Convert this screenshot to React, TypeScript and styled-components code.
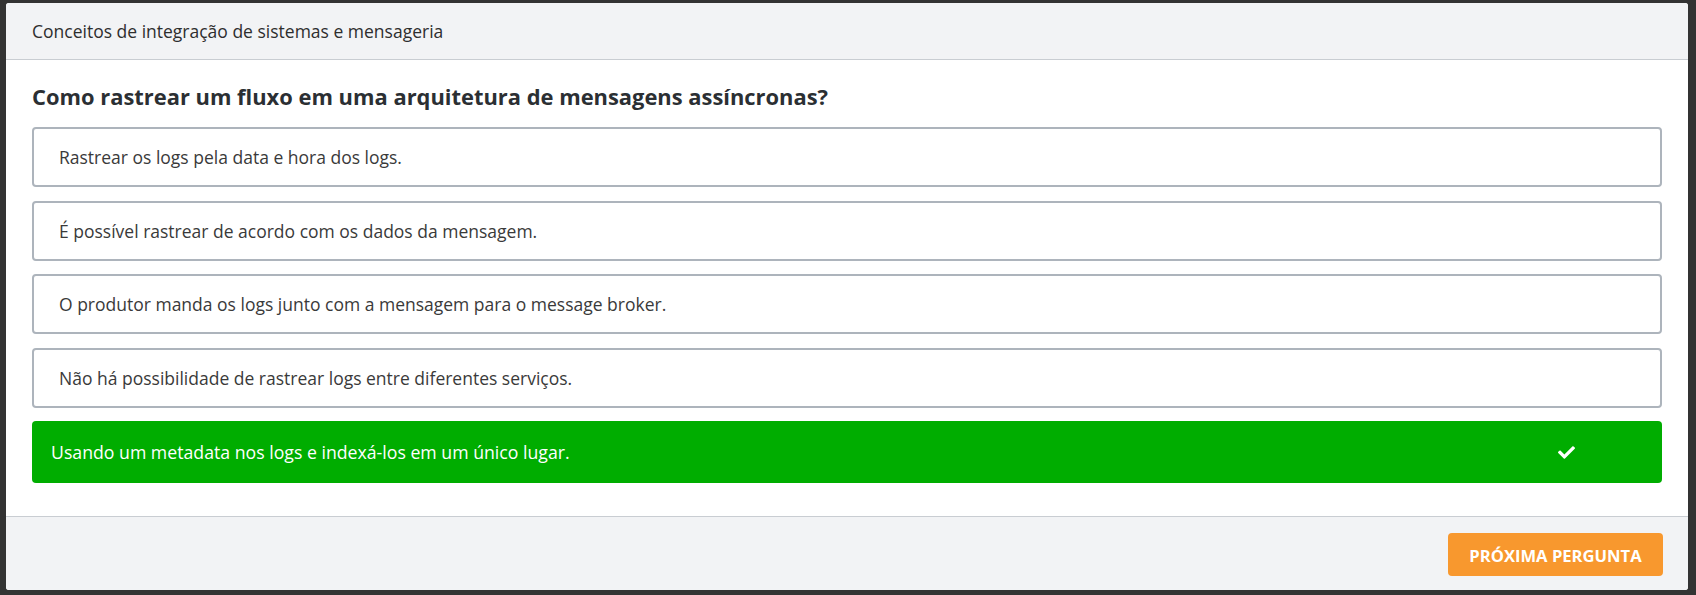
import React from "react";
import styled, { createGlobalStyle } from "styled-components";

const Global = createGlobalStyle`
  html, body { margin: 0; padding: 0; background: #333333; }
  body { font-family: "Open Sans", "Noto Sans", sans-serif; }
  * { box-sizing: border-box; }
`;

const Page = styled.div`
  padding: 3px 8px 5px 6px;
`;

const Card = styled.section`
  background: #ffffff;
  border-radius: 3px;
  overflow: hidden;
  height: 587px;
  display: flex;
  flex-direction: column;
`;

const Header = styled.header`
  height: 57px;
  background: #f2f3f5;
  border-bottom: 1px solid #c9cdd2;
  display: flex;
  align-items: center;
  padding: 0 26px;
  font-size: 17.5px;
  color: #2e2e2e;
`;

const Body = styled.div`
  padding: 22px 26px 33px;
  display: flex;
  flex-direction: column;
`;

const Question = styled.h2`
  margin: 0 0 15px;
  font-size: 21.9px;
  line-height: 30px;
  font-weight: 700;
  color: #2b2f33;
`;

const Options = styled.div`
  display: flex;
  flex-direction: column;
  gap: 13.5px;
`;

const Option = styled.div<{ $correct?: boolean }>`
  display: flex;
  align-items: center;
  justify-content: space-between;
  height: ${(p) => (p.$correct ? "62px" : "60px")};
  border-radius: 4px;
  border: ${(p) => (p.$correct ? "none" : "2px solid #adb4bc")};
  background: ${(p) => (p.$correct ? "#00ad00" : "#ffffff")};
  color: ${(p) => (p.$correct ? "#ffffff" : "#3a3a3a")};
  padding: ${(p) => (p.$correct ? "0 87px 0 19px" : "0 25px")};
  font-size: ${(p) => (p.$correct ? "17.7px" : "17.5px")};
`;

const Footer = styled.footer`
  flex: 1;
  background: #f2f3f5;
  border-top: 1px solid #c9cdd2;
  display: flex;
  justify-content: flex-end;
  align-items: flex-start;
  padding: 16px 25px 0;
`;

const NextButton = styled.button`
  width: 215px;
  height: 43px;
  padding: 2px 0 0;
  border: none;
  border-radius: 4px;
  background: #f8982e;
  color: #ffffff;
  font-family: "Open Sans", "Noto Sans", sans-serif;
  font-weight: 700;
  font-size: 16.6px;
  text-transform: uppercase;
  cursor: pointer;
`;

const Check = () => (
  <svg width="17" height="13" viewBox="0 0 512 384" fill="#ffffff" aria-hidden>
    <path d="M173.9 375.5L7.5 209.1c-10-10-10-26.2 0-36.2l36.2-36.2c10-10 26.2-10 36.2 0L192 248.8 432.1 8.7c10-10 26.2-10 36.2 0l36.2 36.2c10 10 10 26.2 0 36.2L210.1 375.5c-10 10-26.2 10-36.2 0z" />
  </svg>
);

const answers = [
  "Rastrear os logs pela data e hora dos logs.",
  "É possível rastrear de acordo com os dados da mensagem.",
  "O produtor manda os logs junto com a mensagem para o message broker.",
  "Não há possibilidade de rastrear logs entre diferentes serviços.",
];

export default function App() {
  return (
    <>
      <Global />
      <Page>
        <Card>
          <Header>Conceitos de integração de sistemas e mensageria</Header>
          <Body>
            <Question>Como rastrear um fluxo em uma arquitetura de mensagens assíncronas?</Question>
            <Options>
              {answers.map((a) => (
                <Option key={a}>{a}</Option>
              ))}
              <Option $correct>
                <span>Usando um metadata nos logs e indexá-los em um único lugar.</span>
                <Check />
              </Option>
            </Options>
          </Body>
          <Footer>
            <NextButton>Próxima pergunta</NextButton>
          </Footer>
        </Card>
      </Page>
    </>
  );
}
